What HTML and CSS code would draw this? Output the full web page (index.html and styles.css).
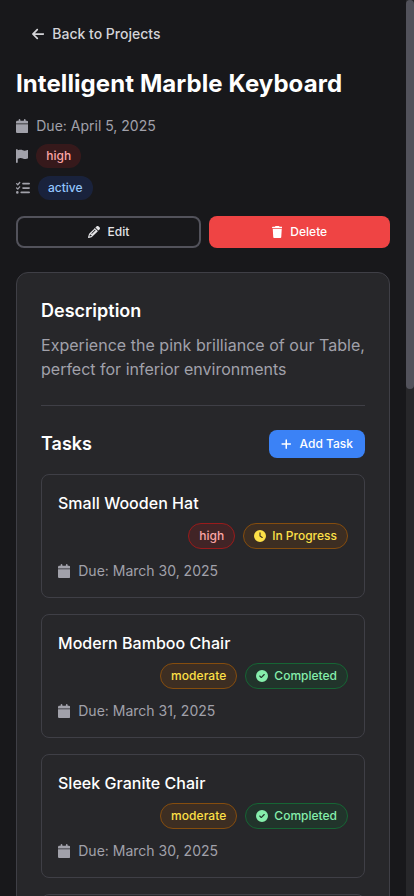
FILE: index.html
```html
<!DOCTYPE html>
<html lang="en">
<head>
<meta charset="utf-8">
<meta name="viewport" content="width=device-width, initial-scale=1">
<title>Intelligent Marble Keyboard</title>
<link rel="stylesheet" href="styles.css">
</head>
<body>
<svg class="sprite" aria-hidden="true">
  <symbol id="calendar" viewBox="0 0 448 512"><path d="M96 32V64H48C21.500 64 0 85.500 0 112v48H448V112c0-26.500-21.500-48-48-48H352V32c0-17.700-14.300-32-32-32s-32 14.300-32 32V64H160V32c0-17.700-14.300-32-32-32S96 14.300 96 32zM448 192H0V464c0 26.500 21.500 48 48 48H400c26.500 0 48-21.500 48-48V192z"/></symbol>
  <symbol id="flag" viewBox="0 0 448 512"><path d="M64 32C64 14.300 49.700 0 32 0S0 14.300 0 32V480c0 17.700 14.300 32 32 32s32-14.300 32-32V352l64.300-16.100c41.100-10.300 84.600-5.500 122.500 13.400c44.200 22.100 95.500 24.800 141.700 7.400l34.700-13c12.500-4.700 20.800-16.600 20.800-30V66.100c0-23-24.200-38-44.800-27.700l-9.600 4.800c-46.300 23.200-100.800 23.200-147.100 0c-35.100-17.600-75.400-22-113.500-12.500L64 48V32z"/></symbol>
  <symbol id="list" viewBox="0 0 512 512"><path d="M152.100 38.200c9.900 8.900 10.700 24 1.800 33.900l-72 80c-4.400 4.900-10.600 7.800-17.200 7.900s-12.900-2.400-17.600-7L7 113C-2.300 103.600-2.300 88.400 7 79s24.600-9.400 33.900 0l22.100 22.100 55.100-61.200c8.900-9.900 24-10.700 33.900-1.800zm0 160c9.900 8.900 10.700 24 1.800 33.900l-72 80c-4.400 4.900-10.600 7.800-17.200 7.900s-12.900-2.400-17.600-7L7 273c-9.400-9.400-9.400-24.600 0-33.900s24.600-9.400 33.900 0l22.100 22.100 55.100-61.200c8.900-9.900 24-10.700 33.900-1.800zM224 96c0-17.700 14.300-32 32-32H480c17.700 0 32 14.300 32 32s-14.300 32-32 32H256c-17.700 0-32-14.300-32-32zm0 160c0-17.700 14.300-32 32-32H480c17.700 0 32 14.300 32 32s-14.300 32-32 32H256c-17.700 0-32-14.300-32-32zM160 416c0-17.700 14.300-32 32-32H480c17.700 0 32 14.300 32 32s-14.300 32-32 32H192c-17.700 0-32-14.300-32-32zM48 368a48 48 0 1 1 0 96 48 48 0 1 1 0-96z"/></symbol>
  <symbol id="arrow" viewBox="0 0 448 512"><path d="M9.400 233.400c-12.500 12.500-12.500 32.800 0 45.300l160 160c12.500 12.500 32.800 12.500 45.300 0s12.500-32.800 0-45.300L109.200 288 416 288c17.700 0 32-14.300 32-32s-14.300-32-32-32l-306.700 0L214.600 118.600c12.500-12.500 12.500-32.800 0-45.300s-32.800-12.500-45.300 0l-160 160z"/></symbol>
  <symbol id="pencil" viewBox="0 0 512 512"><path d="M410.300 231l11.300-11.300-33.900-33.900-62.100-62.100L291.700 89.800l-11.300 11.300-22.600 22.600L58.600 322.900c-10.400 10.400-18 23.300-22.200 37.400L1 480.700c-2.500 8.400-.2 17.500 6.100 23.700s15.300 8.500 23.700 6.100l120.300-35.400c14.100-4.200 27-11.800 37.400-22.200L387.700 253.700 410.300 231zM160 399.400l-9.100 22.700c-4 3.100-8.500 5.400-13.300 6.900L59.400 452l23-78.100c1.400-4.900 3.800-9.400 6.900-13.300l22.700-9.100v32c0 8.800 7.200 16 16 16h32zM362.700 18.700L348.300 33.200 325.700 55.800 314.300 67.100l33.900 33.900 62.100 62.100 33.900 33.900 11.300-11.300 22.600-22.600 14.500-14.500c25-25 25-65.500 0-90.500L453.300 18.700c-25-25-65.500-25-90.500 0zm-47.400 168l-144 144c-6.200 6.200-16.400 6.200-22.600 0s-6.200-16.400 0-22.600l144-144c6.200-6.200 16.400-6.200 22.600 0s6.200 16.400 0 22.600z"/></symbol>
  <symbol id="trash" viewBox="0 0 448 512"><path d="M135.200 17.700L128 32H32C14.300 32 0 46.300 0 64S14.300 96 32 96H416c17.700 0 32-14.300 32-32s-14.300-32-32-32H320l-7.200-14.300C307.400 6.800 296.300 0 284.200 0H163.800c-12.100 0-23.200 6.800-28.600 17.700zM416 128H32L53.200 467c1.600 25.300 22.600 45 47.900 45H346.900c25.300 0 46.300-19.700 47.900-45L416 128z"/></symbol>
  <symbol id="plus" viewBox="0 0 448 512"><path d="M256 80c0-17.700-14.300-32-32-32s-32 14.300-32 32V224H48c-17.700 0-32 14.300-32 32s14.300 32 32 32H192V432c0 17.700 14.300 32 32 32s32-14.300 32-32V288H400c17.700 0 32-14.300 32-32s-14.300-32-32-32H256V80z"/></symbol>
  <symbol id="clock" viewBox="0 0 512 512"><path d="M256 0a256 256 0 1 1 0 512A256 256 0 1 1 256 0zM232 120V256c0 8 4 15.500 10.700 20l96 64c11 7.400 25.900 4.400 33.300-6.700s4.400-25.900-6.700-33.300L280 243.200V120c0-13.300-10.700-24-24-24s-24 10.700-24 24z"/></symbol>
  <symbol id="check" viewBox="0 0 512 512"><path d="M256 512A256 256 0 1 0 256 0a256 256 0 1 0 0 512zM369 209L241 337c-9.400 9.400-24.600 9.400-33.900 0l-64-64c-9.400-9.400-9.400-24.600 0-33.900s24.600-9.400 33.900 0l47 47L335 175c9.400-9.400 24.600-9.400 33.900 0s9.400 24.600 0 33.900z"/></symbol>
</svg>
<div class="app">
  <main class="page">
    <a class="back"><svg class="icon"><use href="#arrow"/></svg>Back to Projects</a>
    <h1>Intelligent Marble Keyboard</h1>
    <div class="meta">
      <div class="row"><svg class="icon"><use href="#calendar"/></svg>Due: April 5, 2025</div>
      <div class="row"><svg class="icon"><use href="#flag"/></svg><span class="pill pill-high">high</span></div>
      <div class="row"><svg class="icon icon-wide"><use href="#list"/></svg><span class="pill pill-active">active</span></div>
    </div>
    <div class="actions">
      <button class="btn btn-edit"><svg class="icon icon-wide"><use href="#pencil"/></svg>Edit</button>
      <button class="btn btn-delete"><svg class="icon"><use href="#trash"/></svg>Delete</button>
    </div>
    <section class="card">
      <div class="description">
        <h2>Description</h2>
        <p>Experience the pink brilliance of our Table, perfect for inferior environments</p>
      </div>
      <div class="tasks-head">
        <h2>Tasks</h2>
        <button class="btn btn-add"><svg class="icon"><use href="#plus"/></svg>Add Task</button>
      </div>
      <div class="tasks">
        <article class="task">
          <h3>Small Wooden Hat</h3>
          <div class="badges"><span class="badge red">high</span><span class="badge yellow"><svg class="icon icon-wide"><use href="#clock"/></svg>In Progress</span></div>
          <div class="row"><svg class="icon"><use href="#calendar"/></svg>Due: March 30, 2025</div>
        </article>
        <article class="task">
          <h3>Modern Bamboo Chair</h3>
          <div class="badges"><span class="badge yellow">moderate</span><span class="badge green"><svg class="icon icon-wide"><use href="#check"/></svg>Completed</span></div>
          <div class="row"><svg class="icon"><use href="#calendar"/></svg>Due: March 31, 2025</div>
        </article>
        <article class="task">
          <h3>Sleek Granite Chair</h3>
          <div class="badges"><span class="badge yellow">moderate</span><span class="badge green"><svg class="icon icon-wide"><use href="#check"/></svg>Completed</span></div>
          <div class="row"><svg class="icon"><use href="#calendar"/></svg>Due: March 30, 2025</div>
        </article>
        <article class="task task-next"></article>
      </div>
    </section>
  </main>
  <div class="scrollbar"><div class="thumb"></div></div>
</div>
</body>
</html>
```
FILE: styles.css
```css
* { box-sizing: border-box; }
body, h1, h2, h3, p { margin: 0; }
body {
  background: #18181b;
  color: #fff;
  font-family: Inter, sans-serif;
  font-size: 14px;
  line-height: 20px;
}
.sprite { display: none; }
.app {
  display: grid;
  grid-template-columns: 1fr 8px;
  height: 896px;
  overflow: hidden;
}
.page { padding: 16px; min-width: 0; }
.scrollbar { background: #27272a; }
.thumb { height: 389px; border-radius: 4px; background: #52525b; }
.icon { width: 0.875em; height: 1em; fill: currentColor; flex: none; }
.icon-wide { width: 1em; }
.back {
  display: flex;
  align-items: center;
  gap: 8px;
  padding: 8px 16px;
  color: #d4d4d8;
  font-weight: 500;
}
h1 { margin-top: 16px; font-size: 24px; line-height: 32px; font-weight: 700; letter-spacing: 0.08px; }
.meta { display: flex; flex-direction: column; gap: 8px; margin-top: 16px; }
.row { display: flex; align-items: center; gap: 8px; color: #a1a1aa; }
.pill {
  padding: 4px 10px;
  border-radius: 12px;
  font-size: 12px;
  line-height: 16px;
  font-weight: 500;
}
.pill-high { background: rgba(127, 29, 29, 0.3); color: #fca5a5; }
.pill-active { background: rgba(30, 58, 138, 0.3); color: #93c5fd; }
.actions { display: flex; gap: 8px; margin-top: 16px; }
.btn {
  display: flex;
  align-items: center;
  justify-content: center;
  gap: 8px;
  border: 0;
  border-radius: 8px;
  padding: 8px 12px;
  color: #fff;
  font: 500 12px/16px Inter, sans-serif;
}
.btn-edit { width: 185px; height: 32px; border: 2px solid #52525b; background: transparent; color: #e4e4e7; }
.btn-delete { flex: 1; height: 32px; background: #ef4444; }
.btn-add { padding: 6px 12px; background: #3b82f6; }
.card {
  margin-top: 24px;
  padding: 24px;
  border: 1px solid #3f3f46;
  border-radius: 12px;
  background: #27272a;
}
h2 { font-size: 18px; line-height: 28px; font-weight: 600; }
.description { padding-bottom: 24px; border-bottom: 1px solid #3f3f46; }
.description p { margin-top: 8px; color: #a1a1aa; font-size: 16px; line-height: 24px; }
.description p::first-line { letter-spacing: 0.03px; }
.tasks-head { display: flex; align-items: center; justify-content: space-between; margin-top: 24px; }
.tasks { display: flex; flex-direction: column; gap: 16px; margin-top: 16px; }
.task { padding: 16px; border: 1px solid #3f3f46; border-radius: 8px; }
.task-next { height: 124px; }
h3 { font-size: 16px; line-height: 24px; font-weight: 500; letter-spacing: 0.03px; }
.badges { display: flex; justify-content: flex-end; gap: 8px; margin: 8px 0 12px; }
.badge {
  display: flex;
  align-items: center;
  gap: 6px;
  padding: 4px 10px;
  border: 1px solid;
  border-radius: 13px;
  font-size: 12px;
  line-height: 16px;
  font-weight: 500;
}
.red { background: rgba(127, 29, 29, 0.3); border-color: #991b1b; color: #fca5a5; }
.yellow { background: rgba(113, 63, 18, 0.3); border-color: #854d0e; color: #fde047; }
.yellow:first-child { letter-spacing: 0.06px; }
.green { background: rgba(20, 83, 45, 0.3); border-color: #166534; color: #86efac; }
```
